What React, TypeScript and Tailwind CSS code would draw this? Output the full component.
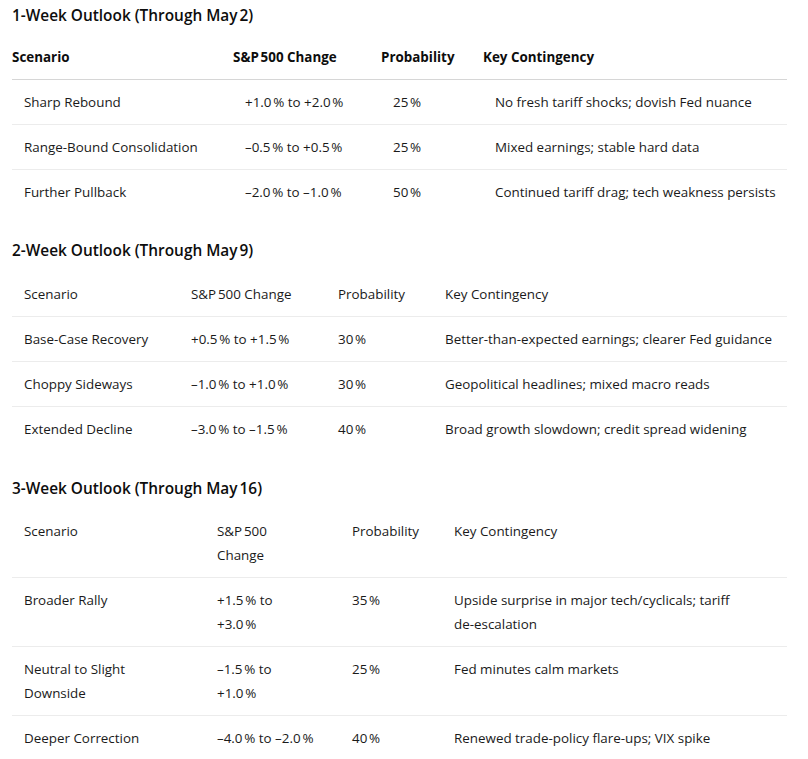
type Row = { cells: React.ReactNode[] };

type Section = {
  title: string;
  boldHead?: boolean;
  cols: string[];
  head: React.ReactNode[];
  rows: Row[];
  titleGap: string;
  tableGap: string;
};

const pct = (s: string) => s.replace(/%/g, "\u202F%");

const sections: Section[] = [
  {
    title: "1-Week Outlook (Through May\u202F2)",
    boldHead: true,
    cols: ["w-[221px]", "w-[148px]", "w-[102px]", "w-[304px]"],
    head: ["Scenario", "S&P\u202F500 Change", "Probability", "Key Contingency"],
    titleGap: "mt-0",
    tableGap: "mt-[7px]",
    rows: [
      { cells: ["Sharp Rebound", pct("+1.0% to +2.0%"), pct("25%"), "No fresh tariff shocks; dovish Fed nuance"] },
      { cells: ["Range-Bound Consolidation", pct("–0.5% to +0.5%"), pct("25%"), "Mixed earnings; stable hard data"] },
      { cells: ["Further Pullback", pct("–2.0% to –1.0%"), pct("50%"), "Continued tariff drag; tech weakness persists"] },
    ],
  },
  {
    title: "2-Week Outlook (Through May\u202F9)",
    cols: ["w-[167px]", "w-[147px]", "w-[107px]", "w-[354px]"],
    head: ["Scenario", "S&P\u202F500 Change", "Probability", "Key Contingency"],
    titleGap: "mt-[25px]",
    tableGap: "mt-[9px]",
    rows: [
      { cells: ["Base-Case Recovery", pct("+0.5% to +1.5%"), pct("30%"), "Better-than-expected earnings; clearer Fed guidance"] },
      { cells: ["Choppy Sideways", pct("–1.0% to +1.0%"), pct("30%"), "Geopolitical headlines; mixed macro reads"] },
      { cells: ["Extended Decline", pct("–3.0% to –1.5%"), pct("40%"), "Broad growth slowdown; credit spread widening"] },
    ],
  },
  {
    title: "3-Week Outlook (Through May\u202F16)",
    cols: ["w-[193px]", "w-[135px]", "w-[102px]", "w-[345px]"],
    head: [
      "Scenario",
      <>S&P{"\u202F"}500<br />Change</>,
      "Probability",
      "Key Contingency",
    ],
    titleGap: "mt-[26px]",
    tableGap: "mt-[8px]",
    rows: [
      {
        cells: [
          "Broader Rally",
          <>{pct("+1.5% to")}<br />{pct("+3.0%")}</>,
          pct("35%"),
          <>Upside surprise in major tech/cyclicals; tariff<br />de-escalation</>,
        ],
      },
      {
        cells: [
          <>Neutral to Slight<br />Downside</>,
          <>{pct("–1.5% to")}<br />{pct("+1.0%")}</>,
          pct("25%"),
          "Fed minutes calm markets",
        ],
      },
      { cells: ["Deeper Correction", pct("–4.0% to –2.0%"), pct("40%"), "Renewed trade-policy flare-ups; VIX spike"] },
    ],
  },
];

function OutlookTable({ s }: { s: Section }) {
  return (
    <section>
      <h3 className={`${s.titleGap} text-[15.4px] leading-6 font-semibold text-[#0d0d0d]`}>{s.title}</h3>
      <table className={`${s.tableGap} w-[775px] table-fixed border-collapse text-left`}>
        <colgroup>
          {s.cols.map((c, i) => (
            <col key={i} className={c} />
          ))}
        </colgroup>
        <thead>
          <tr className={s.boldHead ? "border-b border-[#d6d6d6]" : "border-b border-[#ececec]"}>
            {s.head.map((h, i) => (
              <th
                key={i}
                className={`whitespace-nowrap py-[10px] align-top leading-6 ${
                  s.boldHead ? "pl-0 font-bold text-[#0d0d0d]" : "pl-3 font-normal text-[#1a1a1a]"
                }`}
              >
                {h}
              </th>
            ))}
          </tr>
        </thead>
        <tbody>
          {s.rows.map((r, ri) => (
            <tr key={ri} className={ri < s.rows.length - 1 ? "border-b border-[#ececec]" : ""}>
              {r.cells.map((c, ci) => (
                <td key={ci} className="whitespace-nowrap py-[10px] pl-3 align-top leading-6 text-[#1a1a1a]">
                  {c}
                </td>
              ))}
            </tr>
          ))}
        </tbody>
      </table>
    </section>
  );
}

export default function App() {
  return (
    <div
      className="min-h-[759px] w-[808px] bg-white px-3 pt-1 text-[13.4px] text-[#1a1a1a]"
      style={{ fontFamily: '"Segoe UI", "Open Sans", "Noto Sans", sans-serif' }}
    >
      {sections.map((s, i) => (
        <OutlookTable key={i} s={s} />
      ))}
    </div>
  );
}
